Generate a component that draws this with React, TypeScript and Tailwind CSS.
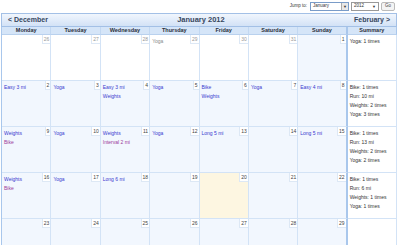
import React from "react";

type Ev = { text: string; visited?: boolean };
type Day = { n: number; events: Ev[]; other?: boolean; today?: boolean };
type Week = { days: Day[]; summary: string[] };

const d = (n: number, texts: (string | Ev)[] = [], extra: Partial<Day> = {}): Day => ({
  n,
  events: texts.map((t) => (typeof t === "string" ? { text: t } : t)),
  ...extra,
});

const weeks: Week[] = [
  {
    days: [
      d(26, [], { other: true }),
      d(27, [], { other: true }),
      d(28, [], { other: true }),
      d(29, ["Yoga"], { other: true }),
      d(30, [], { other: true }),
      d(31, [], { other: true }),
      d(1),
    ],
    summary: ["Yoga: 1 times"],
  },
  {
    days: [
      d(2, ["Easy 3 mi"]),
      d(3, ["Yoga"]),
      d(4, ["Easy 3 mi", "Weights"]),
      d(5, ["Yoga"]),
      d(6, ["Bike", "Weights"]),
      d(7, ["Yoga"]),
      d(8, ["Easy 4 mi"]),
    ],
    summary: ["Bike: 1 times", "Run: 10 mi", "Weights: 2 times", "Yoga: 3 times"],
  },
  {
    days: [
      d(9, ["Weights", { text: "Bike", visited: true }]),
      d(10, ["Yoga"]),
      d(11, ["Weights", { text: "Interval 2 mi", visited: true }]),
      d(12, ["Yoga"]),
      d(13, ["Long 5 mi"]),
      d(14),
      d(15, ["Long 5 mi"]),
    ],
    summary: ["Bike: 1 times", "Run: 13 mi", "Weights: 2 times", "Yoga: 2 times"],
  },
  {
    days: [
      d(16, ["Weights", { text: "Bike", visited: true }]),
      d(17, ["Yoga"]),
      d(18, ["Long 6 mi"]),
      d(19),
      d(20, [], { today: true }),
      d(21),
      d(22),
    ],
    summary: ["Bike: 1 times", "Run: 6 mi", "Weights: 1 times", "Yoga: 1 times"],
  },
  {
    days: [d(23), d(24), d(25), d(26), d(27), d(28), d(29)],
    summary: [],
  },
];

const headers = ["Monday", "Tuesday", "Wednesday", "Thursday", "Friday", "Saturday", "Sunday", "Summary"];

const DayCell: React.FC<{ day: Day; col: number }> = ({ day, col }) => {
  const bg = day.today ? "bg-[#fdf6e1]" : day.other ? "bg-white" : "bg-[#f2f7fe]";
  const edge = col === 6 ? "border-r-2 border-r-[#a9c7ec]" : "border-r border-r-[#d3e3f6]";
  return (
    <div className={`flex h-[46px] items-start border-b border-b-[#d3e3f6] ${edge} ${bg}`}>
      <div className="flex flex-1 flex-col pl-[2px] pt-[2px] leading-[9px]">
        {day.events.map((ev, i) => (
          <span
            key={i}
            className={day.other ? "text-[#8a8a8a]" : ev.visited ? "text-[#9a3a9a]" : "text-[#3a3acf]"}
          >
            {ev.text}
          </span>
        ))}
      </div>
      <span
        className={`border-b border-l border-[#dde8f5] bg-white px-[1px] leading-[8px] ${
          day.other ? "text-[#999]" : "text-[#444]"
        }`}
      >
        {day.n}
      </span>
    </div>
  );
};

export default function App() {
  return (
    <div className="h-[245px] w-[400px] overflow-hidden bg-white font-['Liberation_Sans',Arial,sans-serif] text-[5px]">
      <div className="flex h-[13px] items-center justify-end gap-[2px] pr-[5px] text-[#333]">
        <span className="mr-[1px] text-[4.5px]">Jump to:</span>
        <div className="flex h-[9px] w-[39px] items-center border border-[#7a9cc8] bg-white text-[4.5px]">
          <span className="flex-1 pl-[2px]">January</span>
          <span className="flex h-full w-[7px] items-center justify-center border-l border-[#aaa] bg-[#e8e8e8] text-[4px]">
            ▼
          </span>
        </div>
        <div className="flex h-[9px] w-[28px] items-center border border-[#999] bg-white text-[4.5px]">
          <span className="flex-1 pl-[2px]">2012</span>
          <span className="pr-[2px] text-[4px]">▼</span>
        </div>
        <div className="flex h-[9px] items-center rounded-[2px] border border-[#bbb] bg-[#f4f4f4] px-[3px] text-[4.5px] text-[#444]">
          Go
        </div>
      </div>

      <div className="ml-[1px] w-[396px]">
        <div className="flex h-[14px] items-center justify-between border border-[#a3c0e6] bg-gradient-to-b from-[#f1f6fd] to-[#d3e2f6] px-[6px] text-[7px] font-bold text-[#37475e]">
          <span>&lt; December</span>
          <span className="text-[7.5px]">January 2012</span>
          <span>February &gt;</span>
        </div>

        <div className="grid grid-cols-8 border-l border-l-[#a9c7ec]">
          {headers.map((h, i) => (
            <div
              key={h}
              className={`flex h-[8px] items-center justify-center border-b border-b-[#b9d1ee] bg-[#d5e5f8] text-[5.5px] font-bold leading-none text-[#2a2f3a] ${
                i === 6 ? "border-r-2 border-r-[#a9c7ec]" : i === 7 ? "border-r border-r-[#a9c7ec]" : "border-r border-r-[#c2d8f2]"
              }`}
            >
              {h}
            </div>
          ))}

          {weeks.map((w, wi) => (
            <React.Fragment key={wi}>
              {w.days.map((day, ci) => (
                <DayCell key={ci} day={day} col={ci} />
              ))}
              <div className="flex h-[46px] flex-col border-b border-r border-[#d3e3f6] bg-white pl-[2px] pt-[2px] leading-[9px] text-[#333]">
                {w.summary.map((s) => (
                  <span key={s}>{s}</span>
                ))}
              </div>
            </React.Fragment>
          ))}
        </div>
      </div>
    </div>
  );
}
